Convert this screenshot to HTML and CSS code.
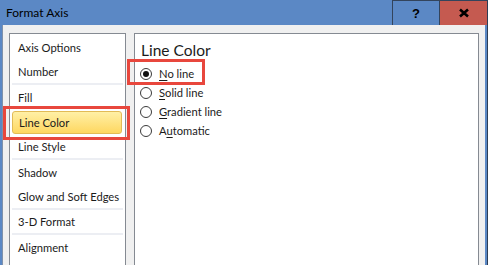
FILE: index.html
```html
<!DOCTYPE html>
<html lang="en">

<head>
    <meta charset="UTF-8">
    <title>Format Axis</title>
    <link rel="stylesheet" href="styles.css">
</head>

<body>

    <div class="window">
        <!-- Title Bar -->
        <div class="titlebar">
            <span class="title">Format Axis</span>
            <div class="title-buttons">
                <button class="tb-btn help">?</button>
                <button class="tb-btn close">
                    <svg width="12" height="10" viewBox="0 0 12 10">
                        <path d="M2 1.5 L10 8.5 M10 1.5 L2 8.5" stroke="#000" stroke-width="2.6" fill="none" />
                    </svg>
                </button>
            </div>
        </div>

        <div class="frame">
            <div class="client">
                <!-- Category List -->
                <ul class="nav-list">
                    <li class="nav-item">Axis Options</li>
                    <li class="nav-item group-end">Number</li>
                    <li class="nav-item">Fill</li>
                    <li class="nav-item active">Line Color<span class="mark mark-nav"></span></li>
                    <li class="nav-item group-end">Line Style</li>
                    <li class="nav-item">Shadow</li>
                    <li class="nav-item group-end">Glow and Soft Edges</li>
                    <li class="nav-item group-end">3-D Format</li>
                    <li class="nav-item">Alignment</li>
                </ul>

                <!-- Options Panel -->
                <div class="panel">
                    <h2 class="panel-title">Line Color</h2>
                    <label class="radio-row">
                        <span class="radio checked"></span>
                        <span><u>N</u>o line</span>
                        <span class="mark mark-radio"></span>
                    </label>
                    <label class="radio-row">
                        <span class="radio"></span>
                        <span><u>S</u>olid line</span>
                    </label>
                    <label class="radio-row">
                        <span class="radio"></span>
                        <span><u>G</u>radient line</span>
                    </label>
                    <label class="radio-row">
                        <span class="radio"></span>
                        <span>A<u>u</u>tomatic</span>
                    </label>
                </div>
            </div>
        </div>
    </div>

</body>

</html>
```

FILE: styles.css
```css
body {
    margin: 0;
    padding: 0;
    width: 488px;
    height: 265px;
    overflow: hidden;
    font-family: Lato, "Open Sans", sans-serif;
    font-size: 11.2px;
    color: #1b1b1b;
}

.window {
    display: flex;
    flex-direction: column;
    height: 265px;
    border-right: 1px solid #2c3d55;
}

/* Title bar */
.titlebar {
    height: 25px;
    flex-shrink: 0;
    display: flex;
    align-items: center;
    justify-content: space-between;
    background-color: #5b88c5;
    box-sizing: border-box;
}

.title {
    padding-left: 6px;
    font-size: 12px;
    color: #000;
}

.title-buttons {
    display: flex;
    align-self: stretch;
}

.tb-btn {
    width: 48px;
    height: 26px;
    margin: 0 0 -1px -1px;
    padding: 0;
    border: 1px solid #33445c;
    font-family: "Liberation Sans", sans-serif;
    font-size: 13px;
    font-weight: bold;
    color: #000;
    display: flex;
    align-items: center;
    justify-content: center;
}

.tb-btn.help {
    background-color: #5b88c5;
}

.tb-btn.close {
    background-color: #c55a50;
    border-right: none;
}

/* Window body */
.frame {
    flex: 1;
    display: flex;
    background-color: #5b88c5;
    padding: 0 2px;
}

.client {
    flex: 1;
    display: flex;
    gap: 8px;
    padding: 8px 6px 0 6px;
    background-color: #f0f0f0;
    border-left: 1px solid #7f91aa;
}

/* Category list */
.nav-list {
    list-style: none;
    margin: 0;
    padding: 1px 1px 0 1px;
    width: 117px;
    box-sizing: border-box;
    background-color: #fff;
    border: 1px solid #858a92;
    border-bottom: none;
}

.nav-item {
    position: relative;
    height: 25px;
    box-sizing: border-box;
    display: flex;
    align-items: center;
    padding-left: 6px;
    margin: 0 1px;
    white-space: nowrap;
}

.nav-item.group-end {
    border-bottom: 2px solid #eceef3;
}

.nav-item.active {
    height: 23px;
    margin: 1px 2px 1px 1px;
    border: 1px solid #e2bb56;
    border-radius: 3px;
    background: linear-gradient(#fff0a6, #fed761);
}

/* Annotation boxes */
.mark {
    position: absolute;
    border: 3px solid #e8473d;
    box-sizing: border-box;
}

.mark-nav {
    left: -10px;
    right: -9px;
    top: -6px;
    bottom: -7px;
}

.mark-radio {
    left: -13px;
    top: -5px;
    width: 78px;
    height: 26px;
}

/* Options panel */
.panel {
    width: 345px;
    box-sizing: border-box;
    background-color: #fff;
    border: 1px solid #858a92;
    border-bottom: none;
    padding: 6px 0 0 6px;
}

.panel-title {
    margin: 0 0 4px 0;
    font-size: 15.5px;
    font-weight: normal;
    line-height: 20px;
    color: #1b1b1b;
}

.radio-row {
    position: relative;
    display: flex;
    align-items: center;
    gap: 7px;
    height: 19px;
    margin-left: -1px;
    width: max-content;
    font-size: 11.2px;
}

.radio-row u {
    text-decoration-thickness: 1px;
    text-underline-offset: 2px;
}

.radio {
    width: 12px;
    height: 12px;
    box-sizing: border-box;
    border: 1px solid #3b3b3b;
    border-radius: 50%;
    background-color: #fff;
    display: flex;
    align-items: center;
    justify-content: center;
}

.radio.checked::after {
    content: "";
    width: 6px;
    height: 6px;
    border-radius: 50%;
    background-color: #111;
}
```
